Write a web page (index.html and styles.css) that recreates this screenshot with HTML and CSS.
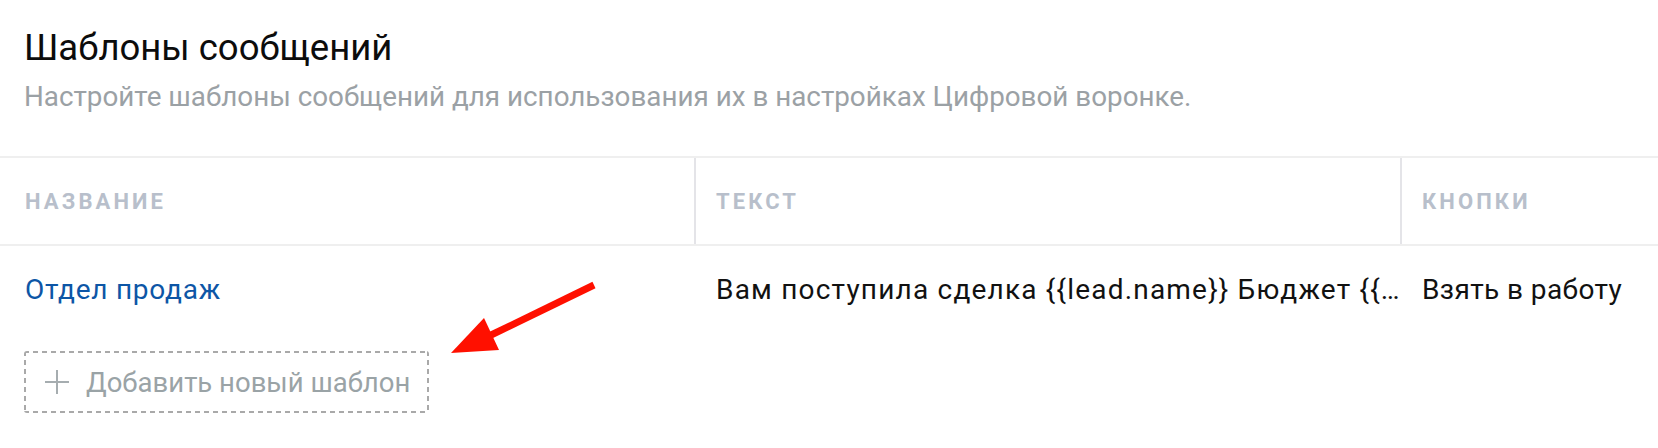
FILE: index.html
```html
<!DOCTYPE html>
<html lang="ru">
<head>
<meta charset="utf-8">
<title>Шаблоны сообщений</title>
<link rel="stylesheet" href="styles.css">
</head>
<body>
<div class="page">
  <header class="intro">
    <h1 class="title">Шаблоны сообщений</h1>
    <p class="subtitle">Настройте шаблоны сообщений для использования их в настройках Цифровой воронке.</p>
  </header>

  <div class="table">
    <div class="row head-row">
      <div class="cell head first">Название</div>
      <div class="cell head divided">Текст</div>
      <div class="cell head divided">Кнопки</div>
    </div>
    <div class="row body-row">
      <div class="cell first"><a class="link" href="#">Отдел продаж</a></div>
      <div class="cell text-cell">Вам поступила сделка {{lead.name}} Бюджет {{…</div>
      <div class="cell">Взять в работу</div>
    </div>
  </div>

  <button class="add-btn" type="button">
    <svg class="plus" width="24" height="24" viewBox="0 0 24 24" aria-hidden="true">
      <path d="M12 0V24M0 12H24" stroke="currentColor" stroke-width="2" fill="none"/>
    </svg>
    <span>Добавить новый шаблон</span>
  </button>

  <svg class="arrow" viewBox="440 270 170 95" width="170" height="95" aria-hidden="true">
    <line x1="489" y1="336" x2="594" y2="285" stroke="#ff1000" stroke-width="7"/>
    <polygon points="451,353 484,318 499,350" fill="#ff1000"/>
  </svg>
</div>
</body>
</html>
```

FILE: styles.css
```css
* { box-sizing: border-box; }

html, body {
  margin: 0;
  background: #ffffff;
}

body {
  font-family: Roboto, "Noto Sans", sans-serif;
  color: #111111;
}

.page {
  position: relative;
  width: 1658px;
  height: 448px;
  overflow: hidden;
}

.intro {
  padding: 24px 24px 0 24px;
}

.title {
  margin: 0;
  font-size: 36.5px;
  line-height: 48px;
  font-weight: 400;
  color: #0c0c0c;
}

.subtitle {
  margin: 7px 0 0 0;
  font-size: 27.8px;
  line-height: 36px;
  color: #9ba1a5;
}

.table {
  margin-top: 41px;
}

.row {
  display: grid;
  grid-template-columns: 694px 706px 1fr;
}

.head-row {
  height: 90px;
  border-top: 2px solid #efefef;
  border-bottom: 2px solid #efefef;
}

.cell {
  display: flex;
  align-items: center;
  padding: 0 16px 0 20px;
  white-space: nowrap;
  overflow: hidden;
}

.cell.first {
  padding-left: 25px;
}

.head {
  font-size: 22px;
  font-weight: 700;
  letter-spacing: 3.1px;
  text-transform: uppercase;
  color: #b8bfcb;
}

.divided {
  border-left: 2px solid #e4e4e8;
}

.body-row {
  height: 86px;
  font-size: 28px;
  letter-spacing: 0.4px;
  color: #111111;
}

.body-row .cell:nth-child(2),
.body-row .cell:nth-child(3) {
  padding-left: 22px;
}

.text-cell {
  text-overflow: ellipsis;
  letter-spacing: 1.2px;
}

.link {
  color: #0d56a6;
  text-decoration: none;
  letter-spacing: 0.75px;
}

.add-btn {
  display: flex;
  align-items: center;
  gap: 17px;
  margin: 19px 0 0 24px;
  width: 405px;
  height: 62px;
  padding: 0 0 0 21px;
  border: none;
  border-radius: 3px;
  font-family: inherit;
  font-size: 27.5px;
  color: #9aa3a6;
  cursor: pointer;
  background:
    repeating-linear-gradient(90deg, #a9a9a9 0 5px, transparent 5px 9px) top left / 100% 2px no-repeat,
    repeating-linear-gradient(90deg, #a9a9a9 0 5px, transparent 5px 9px) bottom left / 100% 2px no-repeat,
    repeating-linear-gradient(180deg, #a9a9a9 0 5px, transparent 5px 9px) top left / 2px 100% no-repeat,
    repeating-linear-gradient(180deg, #a9a9a9 0 5px, transparent 5px 9px) top right / 2px 100% no-repeat,
    #ffffff;
}

.plus {
  flex: none;
  color: #a6adb0;
}

.arrow {
  position: absolute;
  left: 440px;
  top: 270px;
}
```
